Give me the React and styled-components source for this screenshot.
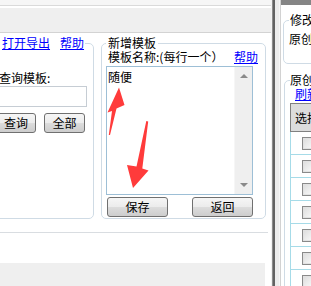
import React from 'react';
import styled, { createGlobalStyle } from 'styled-components';

const Global = createGlobalStyle`
  html, body { margin: 0; padding: 0; background: #fff; overflow: hidden; }
  body {
    font-family: "Noto Sans CJK SC", "Noto Sans", sans-serif;
    font-size: 12px;
    color: #000;
  }
`;

const Root = styled.div`
  position: relative;
  display: flex;
  width: 311px;
  height: 286px;
  overflow: hidden;
`;

const LeftFrame = styled.div`
  flex: none;
  width: 271px;
  display: flex;
  flex-direction: column;
  background: #fff;
  overflow: hidden;
`;

const TopStrip = styled.div`
  flex: none;
  height: 5px;
  background: #f6f6f6;
  border-bottom: 1px solid #dadada;
  margin-bottom: 2px;
`;

const HeaderBand = styled.div`
  flex: none;
  height: 24px;
  background: #efefef;
  border-bottom: 1px solid #d3d3d3;
`;

const Panels = styled.div`
  flex: none;
  display: flex;
  align-items: stretch;
  gap: 7px;
  padding-top: 3px;
`;

const Box = styled.fieldset`
  box-sizing: border-box;
  min-width: 0;
  margin: 0;
  border: 1px solid #cfdbe5;
`;

const QueryBox = styled(Box)`
  flex: none;
  width: 104px;
  margin-left: -10px;
  padding: 0 6px 0 8px;
  border-radius: 0 5px 5px 0;
`;

const TemplateBox = styled(Box)`
  flex: none;
  width: 165px;
  padding: 0 12px 1px 4px;
  border-radius: 5px;
`;

const Legend = styled.legend`
  padding: ${p => p.$pad || '0 2px'};
  line-height: 14px;
  font-size: 12px;
  white-space: nowrap;
`;

const Link = styled.a`
  color: #0000ff;
  text-decoration: underline;
  font-size: 12px;
  line-height: 14px;
  cursor: pointer;
  margin-right: ${p => p.$gap || 0}px;
  margin-left: ${p => (p.$push ? 'auto' : '0')};
`;

const Label = styled.div`
  margin-top: ${p => p.$top || 0}px;
  line-height: 14px;
  white-space: nowrap;
`;

const TextInput = styled.input`
  display: block;
  box-sizing: border-box;
  width: 100%;
  height: 21px;
  margin: 1px 0 0;
  border: 1px solid #c6cdd4;
  background: #fff;
  outline: none;
`;

const ButtonRow = styled.div`
  display: flex;
  justify-content: ${p => p.$justify || 'flex-end'};
  gap: ${p => p.$gap || 0}px;
  margin-top: ${p => p.$top || 0}px;
  padding: ${p => p.$pad || '0'};
`;

const Btn = styled.button`
  box-sizing: border-box;
  flex: none;
  width: ${p => p.$w}px;
  height: 20px;
  padding: 0;
  border: 1px solid #707070;
  border-radius: 3px;
  background: linear-gradient(#f6f6f6 0%, #ececec 48%, #dcdcdc 52%, #cdcdcd 100%);
  font: 12px/18px "Noto Sans CJK SC", sans-serif;
  color: #000;
`;

const LabelRow = styled.div`
  display: flex;
  margin-right: -5px;
  padding-left: 2px;
  line-height: 14px;
  white-space: nowrap;
`;

const Editor = styled.div`
  display: flex;
  box-sizing: border-box;
  height: 129px;
  margin-top: 2px;
  border: 1px solid #9dbfd6;
  background: #fff;
`;

const EditorText = styled.textarea`
  flex: 1;
  min-width: 0;
  margin: 0;
  padding: 3px 0 0 1px;
  border: none;
  outline: none;
  resize: none;
  overflow: hidden;
  font: 12px/14px "Noto Sans CJK SC", sans-serif;
  color: #000;
  background: transparent;
`;

const ScrollTrack = styled.div`
  flex: none;
  width: 17px;
  display: flex;
  flex-direction: column;
  justify-content: space-between;
  align-items: center;
  padding: 7px 0;
  background: #efefef;
  border-left: 1px solid #f6f6f6;
`;

const Arrow = styled.span`
  width: 0;
  height: 0;
  border-left: 4px solid transparent;
  border-right: 4px solid transparent;
  ${p => (p.$down
    ? 'border-top: 4px solid #8a8a8a;'
    : 'border-bottom: 4px solid #8a8a8a;')}
`;

const Divider = styled.div`
  flex: none;
  margin: 13px 3px 0 0;
  border-top: 1px solid #d9dde1;
  height: 30px;
`;

const GrayFoot = styled.div`
  flex: 1;
  margin-right: 6px;
  background: #efefef;
`;

const Splitter = styled.div`
  flex: none;
  width: 10px;
  background: linear-gradient(to right,
    #f2f2f2 0 1px, #8c8c8c 1px 2px, #626262 2px 4px,
    #ececec 4px 8px, #f6f6f6 8px 9px, #d2d2d2 9px 10px);
`;

const RightFrame = styled.div`
  flex: 1;
  min-width: 0;
  display: flex;
  flex-direction: column;
  overflow: hidden;
  background: #fff;
`;

const RightTop = styled.div`
  flex: none;
  height: 5px;
  background: #858585;
`;

const RightInner = styled.div`
  width: 220px;
  padding: 8px 0 0 2px;
`;

const SideBox = styled(Box)`
  padding: ${p => p.$pad};
  margin: ${p => p.$margin || 0};
  border-radius: 5px;
`;

const Grid = styled.div`
  margin-top: 2px;
`;

const GridHead = styled.div`
  box-sizing: border-box;
  height: 29px;
  padding-left: 4px;
  line-height: 27px;
  background: #dcdcdc;
  border: 1px solid #808080;
  border-right: none;
`;

const GridRow = styled.div`
  box-sizing: border-box;
  height: 23px;
  display: flex;
  align-items: center;
  padding-left: 11px;
  border-left: 1px solid #a6dbe8;
  border-bottom: 1px solid #a6dbe8;
`;

const Check = styled.span`
  box-sizing: border-box;
  width: 13px;
  height: 13px;
  border: 1px solid #8a8a8a;
  box-shadow: inset 0 0 0 1px #e2e2e2;
  background: linear-gradient(135deg, #dcdcdc, #fbfbfb);
`;

const Overlay = styled.svg`
  position: absolute;
  left: 0;
  top: 0;
  pointer-events: none;
`;

export default function App() {
  return (
    <>
      <Global />
      <Root>
        <LeftFrame>
          <TopStrip />
          <HeaderBand />
          <Panels>
            <QueryBox>
              <Legend $pad="0 1px 0 3px">
                <Link $gap={10}>打开导出</Link>
                <Link>帮助</Link>
              </Legend>
              <Label $top={21}>查询模板:</Label>
              <TextInput />
              <ButtonRow $top={6} $gap={8} $pad="0 2px 0 0">
                <Btn $w={40}>查询</Btn>
                <Btn $w={41}>全部</Btn>
              </ButtonRow>
            </QueryBox>
            <TemplateBox>
              <Legend>新增模板</Legend>
              <LabelRow>
                <span>模板名称:(每行一个）</span>
                <Link $push>帮助</Link>
              </LabelRow>
              <Editor>
                <EditorText defaultValue="随便" />
                <ScrollTrack>
                  <Arrow />
                  <Arrow $down />
                </ScrollTrack>
              </Editor>
              <ButtonRow $top={2} $justify="space-between" $pad="0 0 0 1px">
                <Btn $w={61}>保存</Btn>
                <Btn $w={61}>返回</Btn>
              </ButtonRow>
            </TemplateBox>
          </Panels>
          <Divider />
          <GrayFoot />
        </LeftFrame>
        <Splitter />
        <RightFrame>
          <RightTop />
          <RightInner>
            <SideBox $pad="0 5px 17px 5px">
              <Legend $pad="0 2px 0 1px">修改模板</Legend>
              <Label $top={5}>原创模板名称</Label>
            </SideBox>
            <SideBox $pad="0 0 0 5px" $margin="9px 0 0 1px">
              <Legend $pad="0 2px 0 0">原创模板列表</Legend>
              <Label>
                <Link style={{ marginLeft: 5 }}>刷新</Link>
              </Label>
              <Grid>
                <GridHead>选择</GridHead>
                {Array.from({ length: 7 }).map((_, i) => (
                  <GridRow key={i}>
                    <Check />
                  </GridRow>
                ))}
              </Grid>
            </SideBox>
          </RightInner>
        </RightFrame>
        <Overlay width="311" height="286" viewBox="0 0 311 286">
          <polygon
            fill="#ff3b3b"
            points="119,87.5 124.5,105 116.5,108.5 110,135 108.8,135 112,111 107.5,112.5"
          />
          <polygon
            fill="#ff3b3b"
            points="146.3,121 148.2,121.5 142.3,168.5 148.5,170.5 133,188 127,165 136.5,166.5"
          />
        </Overlay>
      </Root>
    </>
  );
}
